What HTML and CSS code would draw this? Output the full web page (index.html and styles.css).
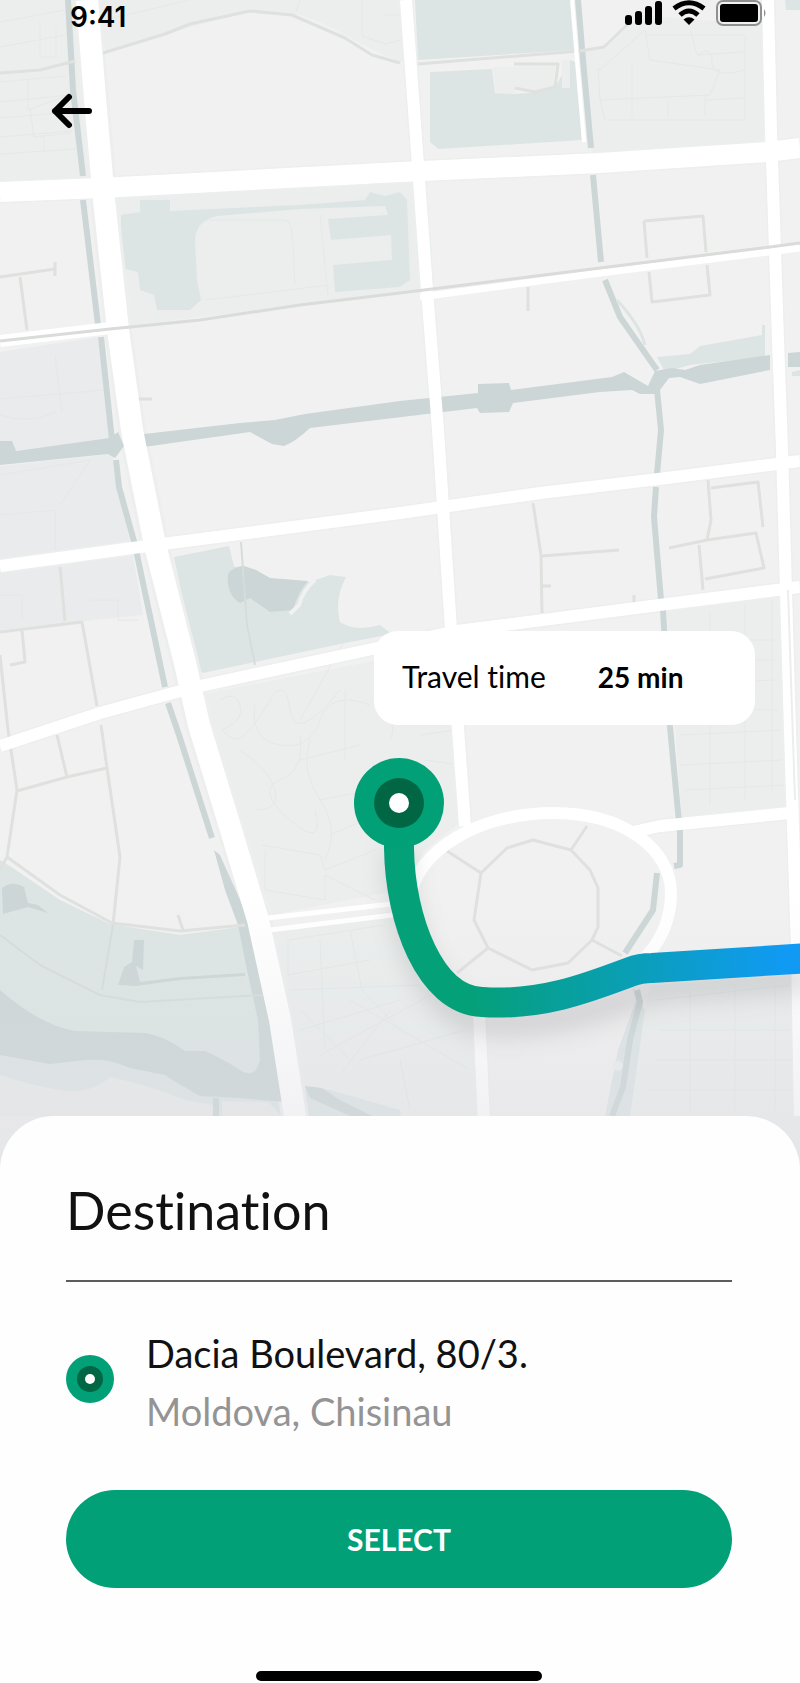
FILE: index.html
```html
<!DOCTYPE html>
<html lang="en">
<head>
<meta charset="utf-8">
<meta name="viewport" content="width=device-width, initial-scale=1">
<title>Destination</title>
<link rel="stylesheet" href="styles.css">
</head>
<body>
<main class="screen">
  <section class="map-area" aria-label="Map">
    <svg class="map" viewBox="0 0 800 1190" preserveAspectRatio="xMidYMin slice" aria-hidden="true">
      <defs>
        <linearGradient id="fade" x1="0" y1="0" x2="0" y2="1">
          <stop offset="0" stop-color="#dcdce2" stop-opacity="0"/>
          <stop offset="1" stop-color="#dcdce2" stop-opacity=".5"/>
        </linearGradient>
        <linearGradient id="route" gradientUnits="userSpaceOnUse" x1="460" y1="940" x2="780" y2="910">
          <stop offset="0" stop-color="#04a077"/>
          <stop offset=".5" stop-color="#0a9fb4"/>
          <stop offset="1" stop-color="#109af4"/>
        </linearGradient>
        <filter id="soft" x="-30%" y="-30%" width="160%" height="180%"><feGaussianBlur stdDeviation="12"/></filter>
      </defs>
      <rect class="land" width="800" height="1190"/>

      <!-- built-up blocks -->
      <g class="block">
        <path d="M0 0H78L92 178 0 182ZM100 0H400L408 64Q380 55 345 35T290 14T250 11Q210 22 170 33L103 53Z"/>
        <path d="M113 198L412 183 424 290 126 326Z"/>
        <path d="M640 15L765 25 768 145 592 153 585 50 606 48Z"/>
        <path d="M204 694L455 645 463 820 425 850 400 890 272 915 235 800Z"/>
        <path d="M275 928L400 910 420 985 480 1020 488 1190H302Z"/>
        <path d="M667 612L782 596 790 808 682 822Z"/>
        <path d="M650 985L800 975V1190H610Z"/>
        <path d="M0 1060L110 1080 210 1095 215 1190H0Z"/>
      </g>
      <path class="lilac" d="M0 352L98 337 112 440 0 452ZM0 466L112 454 118 485 130 542 0 560ZM0 572L133 555 143 615 0 630Z"/>

      <!-- faint lot lines -->
      <g class="lots">
        <path d="M0 22L65 10M0 47L65 35M40 22V57H56V28M0 82L66 76M28 80V110L66 96M0 102L70 95M0 118L70 112M30 110L34 137L70 133M0 137L72 131M0 154L76 149M44 137V152M104 20L190 0M362 0V36L385 44 400 40M385 15H400M300 0L296 12"/>
        <path d="M600 70L645 30 650 60 720 70 710 95 600 100 598 68ZM632 66V116M645 35H745V120L605 120 600 100M690 30L697 55 743 52M668 100V118M705 95V115M697 55Q712 45 712 62T745 70M705 100L745 98"/>
        <path d="M205 220H285Q292 220 293 245L295 285M205 300L330 285M320 215L328 295M55 355L62 412M0 399L105 390M0 415Q30 425 55 412M0 475L90 460 60 505M0 515L55 510V560M0 595H22V620M90 600H118V620H138"/>
        <path d="M220 700Q235 690 240 705T222 730Q235 745 245 735T270 700 290 710 340 690M255 705Q250 740 280 745T320 720 370 705M300 735Q305 770 280 780T290 820 315 810M240 750Q270 770 275 790T255 810M310 740Q300 770 320 800T325 860M262 845L320 855 325 870 375 850M265 850V890L325 900V875L375 900M345 690V760M300 760L360 745M320 800L370 790M330 835L365 820M375 700Q400 720 390 740M420 735L455 730M425 760L460 765M345 640L300 720"/>
        <path d="M288 940L385 925M288 940V975L370 960M320 940L325 1050M350 930L362 990 400 1030M290 990L420 985M300 1030L400 1000M320 1055L440 990M340 1075L390 1010M350 1000L470 1070M360 1060L465 1030M300 1010L350 1060M400 1060L410 1110"/>
        <path d="M675 640H775M675 660H775M675 685L775 680M678 710H778M680 735L780 730M680 765L782 760M685 790L785 785M710 612V805M745 605V800M772 600V790M655 1000L790 985M660 1030H795M655 1060H795M650 1090H795M690 990V1110M735 985V1110M775 985V1110"/>
      </g>

      <!-- parks -->
      <g class="park">
        <path d="M415 0H574L576 50 418 60ZM430 72L492 69 495 93 515 94 540 92 555 88 570 60 575 62 582 140 438 149 430 142Z"/>
        <path d="M121 215L140 212V200H170V211L300 205 365 200 370 192 385 196 400 192 407 200 410 280 400 287 335 292 333 265 392 260 391 235 331 240 328 219 388 215 385 206 300 209 218 216Q196 220 195 240L197 280 201 300 190 310 157 310 154 295 140 290 138 272 121 268Z"/>
        <path d="M174 557L229 546 234 566 246 572 280 580 310 582 330 575 346 577Q334 600 340 622 355 632 380 625L392 634 345 643 203 673 197 668Z"/>
        <path d="M657 357L690 354 700 346 762 335V325H765V357L690 365 665 372Z"/>
        <path d="M0 860L10 866 60 900 110 924 180 935 240 927 285 1116H0ZM305 1086L330 1090 400 1110 410 1190H300ZM632 985L636 1000 618 1050 605 1116H630L645 1010Z"/>
        <path d="M785 0H800V10H786ZM792 372L800 370V376H792Z"/>
      </g>
      <path class="block" d="M122 200H138V211H121ZM493 67L555 66 553 89 530 92 515 88V93L496 92ZM562 60H570V88H562Z"/>
      <path class="land" d="M0 1075Q30 1085 60 1090T110 1077Q150 1085 185 1100L214 1105 216 1190H0ZM222 1101L268 1102 282 1116H222ZM274 985Q262 1000 262 1060Z" opacity=".55"/>

      <g class="edge">
        <path class="w12" d="M0 566L140 547 400 513 540 493 667 478 777 464 800 461M0 746L100 713 173 693 200 686 377 648 457 631 667 604 800 587M406 0L418 165 427 290 438 430 451 630 465 826M479 1010L487 1190M768 0L771 130 778 340 782 450 790 730 797 950 800 1116M633 832L660 826 790 813"/>
        <path class="w23" d="M87 0L96 110 104 200 118 330 132 430 155 545 185 663 199 725 231 830 258 920 280 1020 295 1116 301 1190"/>
        <path class="w20" d="M0 192L100 188 400 172 600 163 767 152 800 148"/>
      </g>

      <!-- water -->
      <g class="water">
        <path d="M0 441L12 441 16 451 110 438 118 432 124 446 115 458 108 454 0 465Z"/>
        <path d="M144 434L240 423 275 420 305 414 400 401 478 393V384L509 383 511 390 612 377 624 372 648 386 655 371 672 368 685 370 700 365 770 355V370L700 384 680 377 669 378 657 394 640 394 632 390 600 392 513 403 509 412 480 413 477 408 310 428Q295 442 284 446L272 444 250 432 144 447Z"/>
        <path d="M788 353L800 352V367H788Z"/>
        <path d="M228 574Q234 566 244 566L256 570 270 578 308 581Q298 592 293 610L270 612 250 598 240 603Q226 595 228 574Z"/>
        <path d="M2 888Q12 880 24 887L28 903 38 905 48 913 28 907 3 914ZM134 940H144L143 970 136 966 140 982 180 977 245 973V976L180 980 136 986 118 985 124 967 132 962Z"/>
        <path d="M0 990Q40 1025 75 1031L145 1033Q165 1036 185 1051L205 1051Q225 1060 240 1070T260 1060L258 1020 247 970 238 925 225 890 214 850 220 855 232 882 249 920 266 1000 285 1102 240 1098 200 1096Q180 1085 165 1075L130 1068Q110 1058 85 1060L50 1064 0 1055ZM305 1086L322 1088 340 1100 372 1116 390 1125 355 1118 310 1098Z"/>
      </g>
      <path class="path-light" d="M315 580Q303 590 299 605L290 614"/>
      <g class="stream">
        <path d="M68 0L73 90 83 176M83 200L98 325M101 337L112 440M116 460L119 487 135 545 165 687M168 703L179 735 212 838"/>
        <path d="M578 0L583 60 591 148M593 175L601 262M605 280L620 317 643 350 657 370M657 390L661 430 657 474M656 487L654 517 661 600M663 610L670 727 680 833V865L674 866M657 873L653 910 625 953M637 990L640 1002 630 1040 623 1087 612 1116M216 1098V1190"/>
      </g>
      <path class="stream-light" d="M617 300Q640 325 645 345"/>
      <circle class="block" cx="618" cy="1066" r="5"/>

      <!-- minor streets -->
      <g class="minor">
        <path d="M0 73L40 70 75 61M103 53L165 34 190 24 250 11 292 15 345 38 372 55 400 63M418 64L580 51 604 47 630 22M514 64H558L555 87 535 92 515 88"/>
        <path d="M0 277L55 269M55 262V276M20 277L27 330M644 221L703 216 706 252M644 221L647 258M649 272L652 302 710 295 707 265M528 287V311M138 399H152"/>
        <path d="M533 503L541 555 542 613M542 556L619 550M542 586H551M634 595V603M708 480L711 520 707 540 669 548M711 488L758 482 763 527M707 540L756 533 764 568 705 579M699 545L703 590"/>
        <path d="M60 567L65 621M0 632L82 622 97 706M22 630L25 662 10 665M0 655L8 730 17 790 7 857 0 870M57 735L67 777 17 791M67 777L107 768M101 725L107 768 120 857 113 925M7 857L60 895 112 923 180 931 245 925M178 915L183 930"/>
        <path d="M241 542L247 625 255 665" class="dim"/>
        <path d="M0 935L40 965 100 995 140 1002 262 995M113 925L102 990" class="dim"/>
        <path d="M533 840L571 850 590 870 598 888V927L592 940 568 963 532 970 488 948 474 920 481 873 507 848ZM571 850L587 826M481 873L447 851M488 948L457 973M592 940L622 956"/>
      </g>

      <!-- roads -->
      <g class="road">
        <path class="w12" d="M0 566L140 547 400 513 540 493 667 478 777 464 800 461M0 746L100 713 173 693 200 686 377 648 457 631 667 604 800 587"/>
        <path class="w12" d="M406 0L418 165 427 290 438 430 451 630 465 826M479 1010L487 1190M768 0L771 130 778 340 782 450 790 730 797 950 800 1116"/>
        <path class="w12" d="M633 832L660 826 790 813M410 900C415 850 480 813 553 813C625 813 671 850 671 893C671 920 660 945 640 962"/>
        <path class="w12" d="M0 341L110 328"/>
        <path class="w7" d="M420 297L600 273 800 248"/>
        <path class="w4" d="M572 0L577 60 584 142"/>
        <path class="w5" d="M268 918L400 903M270 930L400 914"/>
        <path class="w23" d="M87 0L96 110 104 200 118 330 132 430 155 545 185 663 199 725 231 830 258 920 280 1020 295 1116 301 1190"/>
        <path class="w20" d="M0 192L100 188 400 172 600 163 767 152 800 148"/>
      </g>
      <path class="rail" d="M0 341L110 329 200 320 300 305 400 293 600 268 770 247 800 243"/>
      <path class="median" d="M788 590L795 800"/>

      <rect y="900" width="800" height="290" fill="url(#fade)"/>

      <!-- route -->
      <path class="route-shadow" filter="url(#soft)" d="M397 850C401 940 430 1005 475 1020C530 1030 600 1010 650 989L810 978"/>
      <path class="route" d="M399 803V848C400 920 430 1000 482 1002C540 1006 585 989 630 972Q640 968 652 968L810 958"/>
      <circle class="pin-outer" cx="399" cy="803" r="45"/>
      <circle class="pin-inner" cx="399" cy="803" r="25"/>
      <circle class="pin-dot" cx="399" cy="803" r="10"/>
    </svg>

    <header class="status">
      <time class="clock">9:41</time>
      <svg class="status-icons" viewBox="0 0 144 28" role="img" aria-label="Signal, Wi-Fi and battery">
        <g>
          <rect x="1" y="15" width="7" height="10" rx="3"/>
          <rect x="11" y="11" width="7" height="14" rx="3"/>
          <rect x="21" y="6" width="7" height="19" rx="3"/>
          <rect x="31" y="1" width="7" height="24" rx="3"/>
        </g>
        <g class="wifi">
          <path d="M50 8.500Q65 -3 80 8.500"/>
          <path d="M56 15Q65 7 74 15"/>
        </g>
        <path d="M59.500 19.500Q65 15 70.500 19.500L65 25Z"/>
        <rect class="battery" x="93" y="1" width="44" height="24" rx="6"/>
        <rect x="96" y="4" width="38" height="18" rx="3"/>
        <path class="battery-tip" d="M140 9Q143 13 140 17Z"/>
      </svg>
    </header>
    <button class="back" type="button" aria-label="Back">
      <svg viewBox="0 0 42 36" aria-hidden="true"><path d="M39 18H5M19 4L5 18 19 32"/></svg>
    </button>

    <p class="travel"><span>Travel time</span><strong>25 min</strong></p>
  </section>

  <section class="sheet">
    <h1 class="title">Destination</h1>
    <div class="place">
      <svg class="place-pin" viewBox="0 0 48 48" aria-hidden="true">
        <circle class="pin-outer" cx="24" cy="24" r="24"/>
        <circle class="pin-inner" cx="24" cy="24" r="13"/>
        <circle class="pin-dot" cx="24" cy="24" r="5"/>
      </svg>
      <div class="address">
        <p class="street">Dacia Boulevard, 80/3.</p>
        <p class="city">Moldova, Chisinau</p>
      </div>
    </div>
    <button class="select" type="button">SELECT</button>
    <div class="home-bar"></div>
  </section>
</main>
</body>
</html>
```
FILE: styles.css
```css
* { box-sizing: border-box; }

body {
  margin: 0;
  background: #fefefe;
  color: #111;
  font-family: Lato, "Open Sans", sans-serif;
  font-variant-ligatures: none;
}

h1, p { margin: 0; font-weight: 400; }

button {
  border: 0;
  padding: 0;
  background: none;
  font: inherit;
  cursor: pointer;
}

.screen {
  display: flex;
  flex-direction: column;
  min-height: 100vh;
}

/* Map */
.map-area {
  position: relative;
  height: 1190px;
  overflow: hidden;
}

.map {
  position: absolute;
  inset: 0;
  width: 100%;
  height: 100%;
}

.land { fill: #f1f1f1; }
.block { fill: #ebeeed; }
.lilac { fill: #e9ebec; }
.park { fill: #dde5e4; }
.water { fill: #ccd6d6; }

.lots, .minor, .stream, .stream-light, .edge, .road, .rail, .median,
.path-light, .route, .route-shadow { fill: none; stroke-linejoin: round; }

.lots { stroke: #e4e8e7; stroke-width: 1; }
.minor { stroke: #dfe1de; stroke-width: 3; }
.dim { stroke: #d6dcd9; stroke-width: 2; }
.stream { stroke: #ccd6d6; stroke-width: 6; }
.stream-light { stroke: #dde5e4; stroke-width: 3; }
.path-light { stroke: #f1f1f1; stroke-width: 4; }
.rail { stroke: #d9dcd9; stroke-width: 3; }
.median { stroke: #eceeed; stroke-width: 2; }

.road { stroke: #fff; }
.road .w4 { stroke-width: 4; }
.road .w5 { stroke-width: 5; }
.road .w7 { stroke-width: 7; }
.road .w12 { stroke-width: 12; }
.road .w20 { stroke-width: 20; }
.road .w23 { stroke-width: 22; }

.edge { stroke: #ecefee; }
.edge .w12 { stroke-width: 15; }
.edge .w20 { stroke-width: 23; }
.edge .w23 { stroke-width: 28; }

.route { stroke: url(#route); stroke-width: 30; }
.route-shadow { stroke: #6a6a72; stroke-width: 26; opacity: .22; }
.pin-outer { fill: #02a077; }
.pin-inner { fill: #006643; }
.pin-dot { fill: #fff; }

/* Status bar and navigation */
.status {
  position: relative;
  display: flex;
  justify-content: space-between;
  align-items: flex-start;
  height: 30px;
  padding: 0 32px 0 70px;
}

.clock {
  font: 600 28px/34px Inter, sans-serif;
  color: #000;
}

.status-icons { width: 144px; height: 28px; }
.wifi { fill: none; stroke: #000; stroke-width: 5; }
.battery { fill: none; stroke: #8f9090; stroke-width: 2; }
.battery-tip { fill: #8f9090; }

.back {
  position: relative;
  display: block;
  width: 42px;
  height: 36px;
  margin: 63px 0 0 50px;
}

.back svg { display: block; width: 100%; height: 100%; }

.back path {
  fill: none;
  stroke: #000;
  stroke-width: 6;
  stroke-linecap: round;
  stroke-linejoin: round;
}

.travel {
  position: absolute;
  top: 631px;
  right: 45px;
  display: flex;
  align-items: baseline;
  gap: 52px;
  width: 381px;
  height: 94px;
  padding: 27px 28px 0;
  border-radius: 24px;
  background: #fff;
  color: #000;
  font-size: 30px;
  line-height: 36px;
  white-space: nowrap;
}

.travel strong { font-size: 28px; }

/* Bottom sheet */
.sheet {
  position: relative;
  display: flex;
  flex: 1;
  flex-direction: column;
  margin-top: -74px;
  padding: 62px 68px 0 66px;
  border-radius: 54px 54px 0 0;
  background: #fefefe;
}

.title {
  padding-bottom: 38px;
  border-bottom: 2px solid #5c5c5c;
  font-size: 52px;
  line-height: 64px;
}

.place {
  display: flex;
  align-items: flex-start;
  gap: 32px;
  margin-top: 42px;
}

.place-pin {
  flex: none;
  width: 48px;
  height: 48px;
  margin-top: 31px;
}

.address { font-size: 38px; line-height: 58px; }
.city { color: #949494; }

.select {
  height: 98px;
  margin-top: 50px;
  border-radius: 49px;
  background: #02a077;
  color: #fff;
  font-size: 30px;
  font-weight: 700;
}

.home-bar {
  align-self: center;
  width: 286px;
  height: 10px;
  margin: auto 0 2px;
  border-radius: 5px;
  background: #000;
}
```
